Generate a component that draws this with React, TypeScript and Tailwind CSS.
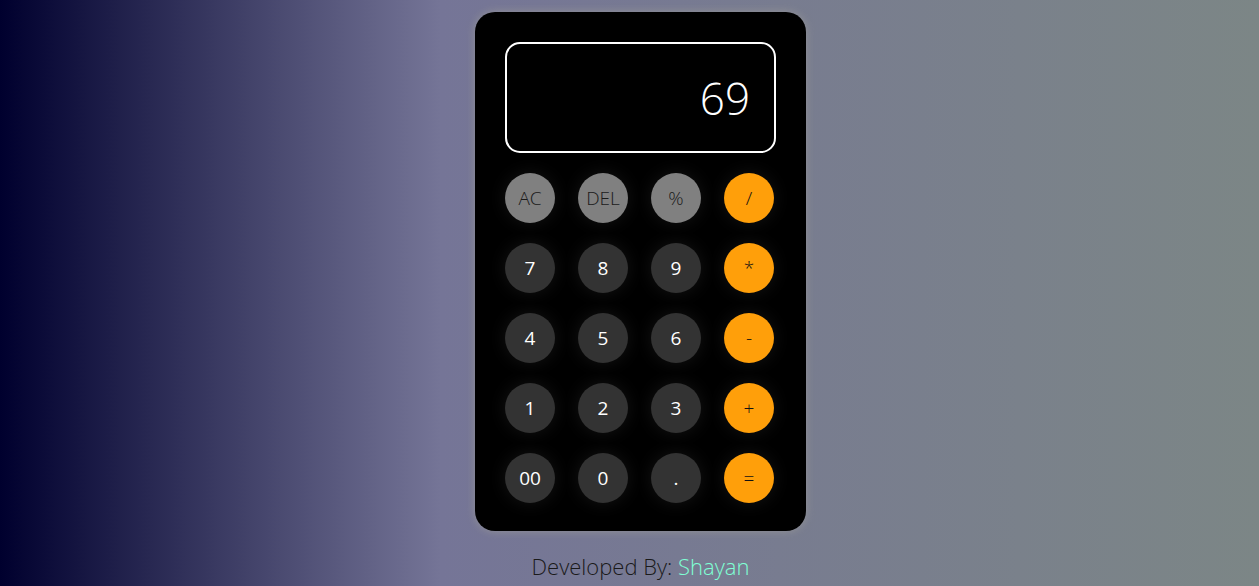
import React from "react";

type Kind = "fn" | "num" | "op";
const rows: { label: string; kind: Kind }[][] = [
  [
    { label: "AC", kind: "fn" },
    { label: "DEL", kind: "fn" },
    { label: "%", kind: "fn" },
    { label: "/", kind: "op" },
  ],
  [
    { label: "7", kind: "num" },
    { label: "8", kind: "num" },
    { label: "9", kind: "num" },
    { label: "*", kind: "op" },
  ],
  [
    { label: "4", kind: "num" },
    { label: "5", kind: "num" },
    { label: "6", kind: "num" },
    { label: "-", kind: "op" },
  ],
  [
    { label: "1", kind: "num" },
    { label: "2", kind: "num" },
    { label: "3", kind: "num" },
    { label: "+", kind: "op" },
  ],
  [
    { label: "00", kind: "num" },
    { label: "0", kind: "num" },
    { label: ".", kind: "num" },
    { label: "=", kind: "op" },
  ],
];

const kindClass: Record<Kind, string> = {
  fn: "bg-[#808080] text-[#1a1a1a] font-light",
  num: "bg-[#333333] text-white font-normal",
  op: "bg-[#ff9f0a] text-[#111111] font-light",
};

export default function App() {
  return (
    <div
      className="min-h-screen w-full flex flex-col items-center pt-3 pl-[22px] bg-[linear-gradient(to_right,#00002e,#757597_35%,#7c8686)]"
      style={{ fontFamily: "'Open Sans', 'Lato', sans-serif" }}
    >
      <div className="w-[331px] h-[519px] bg-black rounded-[20px] pt-[30px] px-[30px] shadow-[0_0_10px_rgba(150,150,150,0.9)] flex flex-col">
        <div className="h-[111px] border-2 border-white rounded-[15px] flex items-center justify-end pr-[24px]">
          <span className="text-white text-[44px] font-light leading-none">69</span>
        </div>
        <div className="mt-[20px] flex flex-col gap-[20px]">
          {rows.map((row, i) => (
            <div key={i} className="flex gap-[23px]">
              {row.map((b) => (
                <div
                  key={b.label}
                  className={`w-[50px] h-[50px] rounded-full flex items-center justify-center text-[19px] shadow-[0_0_18px_rgba(255,255,255,0.08)] ${kindClass[b.kind]}`}
                >
                  {b.label}
                </div>
              ))}
            </div>
          ))}
        </div>
      </div>
      <div className="mt-[21px] text-[22px] leading-[28px] font-light text-[#1a1a1a]">
        Developed By: <span className="text-[#7fffd4]">Shayan</span>
      </div>
    </div>
  );
}
